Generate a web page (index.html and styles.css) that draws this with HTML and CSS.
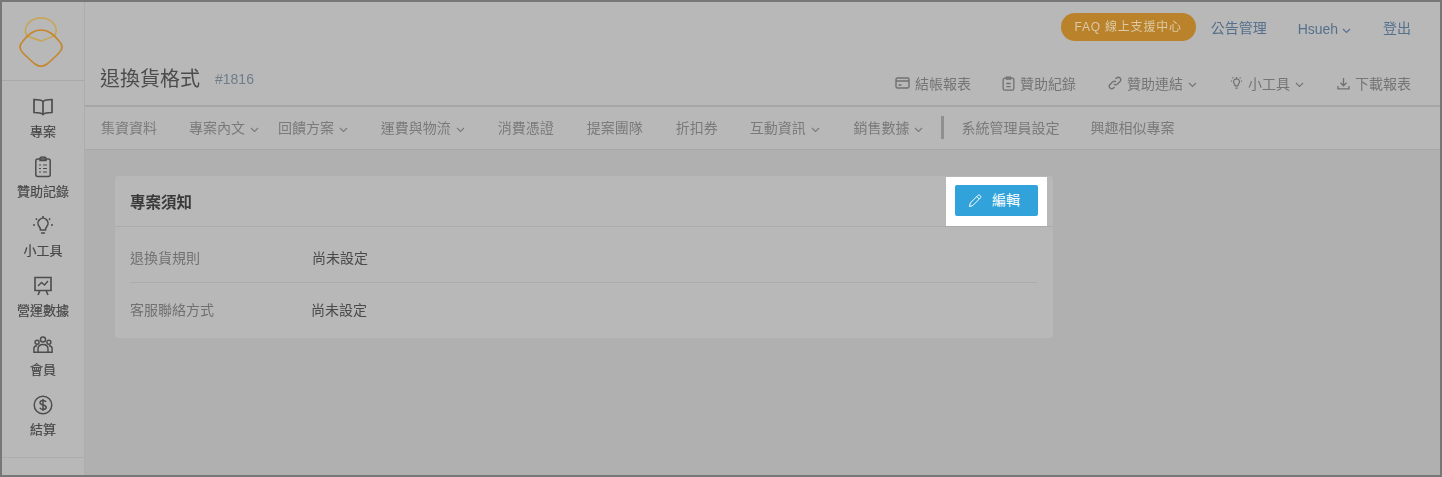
FILE: index.html
```html
<!DOCTYPE html>
<html lang="zh-Hant">
<head>
  <meta charset="UTF-8" />
  <title>退換貨格式</title>
  <link rel="stylesheet" href="styles.css">
</head>
<body>
  <div class="frame">
    <aside class="sidebar soft">
      <div class="logo">
        <svg width="46" height="50" viewBox="0 0 46 50" fill="none">
          <path d="M22 24 C17 22 12 21 8 19 C3 10 11 1 22 1 C33 1 40 10 36 18 C32 21 27 22 22 24 Z" stroke="#c9a44e" stroke-width="1.500"/>
          <path d="M22 13 C30 13 35 18 40 24 C44 28 44 32 40 36 C36 40 32 44 28 47 C24 50 20 50 16 47 C12 44 8 40 4 36 C0 32 0 28 4 24 C9 18 14 13 22 13 Z" stroke="#c4872e" stroke-width="1.700"/>
        </svg>
      </div>
      <nav class="side-nav">
        <a class="side-item">
          <svg class="side-icon" width="20" height="18" viewBox="0 0 20 18" fill="none" stroke="#4d4d4d" stroke-width="1.700"><path d="M10 3.500 C8.500 2 6 1.500 1 1.500 V14.500 C6 14.500 8.500 15 10 16.500 C11.500 15 14 14.500 19 14.500 V1.500 C14 1.500 11.500 2 10 3.500 Z M10 3.500 V16.500"/></svg>
          <span>專案</span>
        </a>
        <a class="side-item">
          <svg class="side-icon" width="18" height="22" viewBox="0 0 18 22" fill="none" stroke="#4d4d4d" stroke-width="1.500"><rect x="1.800" y="3" width="14.400" height="17.500" rx="2"/><path d="M6 3 V2.500 C6 1.500 7 1 9 1 C11 1 12 1.500 12 2.500 V4.500 H6 Z"/><path d="M5 9 H7 M9 9 H13 M5 12.500 H7 M9 12.500 H13 M5 16 H7 M9 16 H13" stroke-width="1.200"/></svg>
          <span>贊助記錄</span>
        </a>
        <a class="side-item">
          <svg class="side-icon" width="22" height="22" viewBox="0 0 22 22" fill="none" stroke="#4d4d4d" stroke-width="1.600"><path d="M7.200 11.500 A5 5 0 1 1 14.800 11.500 C13.800 12.700 13.500 13.500 13.500 15 H8.500 C8.500 13.500 8.200 12.700 7.200 11.500 Z M9 18 H13"/><path d="M11 1 V3 M3.800 3.500 L5 4.800 M18.200 3.500 L17 4.800 M1 10 H3 M19 10 H21"/></svg>
          <span>小工具</span>
        </a>
        <a class="side-item">
          <svg class="side-icon" width="18" height="20" viewBox="0 0 18 20" fill="none" stroke="#4d4d4d" stroke-width="1.600"><path d="M1 1.500 H17 V14.500 H1 Z M6 14.500 L4 19 M12 14.500 L14 19"/><path d="M4 10 L7.500 6.500 L10.500 9 L14 5" stroke-width="1.400"/></svg>
          <span>營運數據</span>
        </a>
        <a class="side-item">
          <svg class="side-icon" width="20" height="19" viewBox="0 0 22 20" fill="none" stroke="#4d4d4d" stroke-width="1.600"><circle cx="11" cy="4" r="2.800"/><circle cx="4.500" cy="7" r="2.200"/><circle cx="17.500" cy="7" r="2.200"/><path d="M5.500 18 V14.500 C5.500 11 8 9.500 11 9.500 C14 9.500 16.500 11 16.500 14.500 V18 Z M5.500 18 H1 V14 C1 12 2.500 10.800 4.500 10.800 M16.500 18 H21 V14 C21 12 19.500 10.800 17.500 10.800"/></svg>
          <span>會員</span>
        </a>
        <a class="side-item">
          <svg class="side-icon" width="20" height="20" viewBox="0 0 20 20" fill="none" stroke="#4d4d4d" stroke-width="1.500"><circle cx="10" cy="10" r="8.800"/><path d="M13 7 C12.500 5.800 11.300 5.500 10 5.500 C8.300 5.500 7 6.200 7 7.700 C7 10.700 13.200 9.200 13.200 12.300 C13.200 13.800 11.800 14.500 10 14.500 C8.500 14.500 7.300 14 6.800 12.800 M10 4 V16"/></svg>
          <span>結算</span>
        </a>
      </nav>
      <div class="side-foot"></div>
    </aside>

    <main class="main">
      <header class="topbar soft">
        <div class="top-links">
          <a class="faq">FAQ 線上支援中心</a>
          <a class="top-link">公告管理</a>
          <a class="top-link user-link">Hsueh <svg class="chev" width="9" height="6" viewBox="0 0 9 6"><path d="M1 1 L4.500 4.500 L8 1"/></svg></a>
          <a class="top-link">登出</a>
        </div>
        <div class="title-row">
          <div class="title-wrap">
            <h1 class="title">退換貨格式</h1>
            <span class="project-id">#1816</span>
          </div>
          <div class="tools">
            <a class="tool">
              <svg width="15" height="12" viewBox="0 0 15 12" fill="none" stroke="#707070" stroke-width="1.400"><rect x="1" y="1" width="13" height="10" rx="1.500"/><path d="M1 4 H14 M3.500 8 H6.500" /></svg>
              結帳報表</a>
            <a class="tool">
              <svg width="13" height="15" viewBox="0 0 12 14" fill="none" stroke="#707070" stroke-width="1.200"><rect x="1" y="2" width="10" height="11.200" rx="1.500"/><path d="M4 2 V1 H8 V3 H4 Z M4 7 H8 M4 10 H8"/></svg>
              贊助紀錄</a>
            <a class="tool">
              <svg width="14" height="14" viewBox="0 0 14 14" fill="none" stroke="#707070" stroke-width="1.300"><path d="M6 8 C7 9 8.500 9 9.500 8 L12 5.500 C13 4.500 13 3 12 2 C11 1 9.500 1 8.500 2 L7.500 3 M8 6 C7 5 5.500 5 4.500 6 L2 8.500 C1 9.500 1 11 2 12 C3 13 4.500 13 5.500 12 L6.500 11"/></svg>
              贊助連結 <svg class="chev" width="9" height="6" viewBox="0 0 9 6"><path d="M1 1 L4.500 4.500 L8 1"/></svg></a>
            <a class="tool">
              <svg width="13" height="14" viewBox="0 0 14 14" fill="none" stroke="#707070" stroke-width="1.300"><path d="M4.800 8 A3.200 3.200 0 1 1 9.200 8 C8.700 8.600 8.500 9 8.500 10 H5.500 C5.500 9 5.300 8.600 4.800 8 Z M5.800 12.500 H8.200 M7 .5 V1.800 M1 5 H2.200 M11.800 5 H13 M2.700 1 L3.500 2 M11.300 1 L10.500 2"/></svg>
              小工具 <svg class="chev" width="9" height="6" viewBox="0 0 9 6"><path d="M1 1 L4.500 4.500 L8 1"/></svg></a>
            <a class="tool">
              <svg width="13" height="13" viewBox="0 0 13 13" fill="none" stroke="#707070" stroke-width="1.300"><path d="M6.500 1 V8.500 M3.500 5.800 L6.500 8.800 L9.500 5.800 M1 9 V11.800 H12 V9"/></svg>
              下載報表</a>
          </div>
        </div>
      </header>

      <nav class="tabs soft">
        <a class="tab tab-first">集資資料</a>
        <a class="tab tab-tight">專案內文 <svg class="chev" width="9" height="6" viewBox="0 0 9 6"><path d="M1 1 L4.500 4.500 L8 1"/></svg></a>
        <a class="tab">回饋方案 <svg class="chev" width="9" height="6" viewBox="0 0 9 6"><path d="M1 1 L4.500 4.500 L8 1"/></svg></a>
        <a class="tab">運費與物流 <svg class="chev" width="9" height="6" viewBox="0 0 9 6"><path d="M1 1 L4.500 4.500 L8 1"/></svg></a>
        <a class="tab">消費憑證</a>
        <a class="tab">提案團隊</a>
        <a class="tab tab-first">折扣券</a>
        <a class="tab tab-wide">互動資訊 <svg class="chev" width="9" height="6" viewBox="0 0 9 6"><path d="M1 1 L4.500 4.500 L8 1"/></svg></a>
        <a class="tab">銷售數據 <svg class="chev" width="9" height="6" viewBox="0 0 9 6"><path d="M1 1 L4.500 4.500 L8 1"/></svg></a>
        <span class="tab-sep"></span>
        <a class="tab">系統管理員設定</a>
        <a class="tab tab-last">興趣相似專案</a>
      </nav>

      <section class="content">
        <div class="card">
          <div class="card-head">
            <h2 class="card-title soft">專案須知</h2>
            <div class="spotlight">
              <button class="edit-btn">
                <svg width="14" height="14" viewBox="0 0 14 14" fill="none" stroke="#fff" stroke-width="1"><path d="M1.500 12.500 L2.300 9 L9.800 1.500 C10.500 .8 11.500 .8 12.200 1.500 C13 2.300 13 3.300 12.300 4 L4.800 11.500 Z M8.800 2.500 L11.300 5"/></svg>
                編輯
              </button>
            </div>
          </div>
          <div class="card-body soft">
            <div class="row">
              <span class="row-label">退換貨規則</span>
              <span class="row-value">尚未設定</span>
            </div>
            <div class="row">
              <span class="row-label">客服聯絡方式</span>
              <span class="row-value">尚未設定</span>
            </div>
          </div>
        </div>
      </section>
    </main>
  </div>
</body>
</html>
```

FILE: styles.css
```css
*, *::before, *::after {
  box-sizing: border-box;
}

html, body {
  height: 100%;
}

body {
  margin: 0;
  background: #b5b5b5;
  font-family: "Liberation Sans", "Noto Sans CJK TC", sans-serif;
  font-size: 14px;
  overflow: hidden;
}

a {
  color: inherit;
  text-decoration: none;
}

/* everything behind the spotlight is slightly out of focus */
.soft {
  filter: blur(0.7px);
}

.frame {
  height: 477px;
  display: flex;
  border: 2px solid #777;
  background: #b0b0b0;
}

.chev {
  fill: none;
  stroke: currentColor;
  stroke-width: 1.100;
}

/* sidebar */
.sidebar {
  width: 83px;
  flex-shrink: 0;
  background: #b8b8b8;
  border-right: 1px solid #adadad;
  display: flex;
  flex-direction: column;
}

.logo {
  height: 79px;
  display: flex;
  align-items: center;
  justify-content: center;
  border-bottom: 1px solid #a8a8a8;
  padding: 1px 3px 0 0;
}

.side-nav {
  display: flex;
  flex-direction: column;
  flex: 1;
  padding-top: 15px;
}

.side-item {
  height: 59.500px;
  display: flex;
  flex-direction: column;
  align-items: center;
  color: #484848;
  font-size: 13px;
  line-height: 16px;
  -webkit-text-stroke: 0.2px #484848;
}

.side-icon {
  height: 22px;
  margin-bottom: 6px;
}

.side-foot {
  height: 18px;
  border-top: 1px solid #adadad;
}

/* header */
.main {
  flex: 1;
  min-width: 0;
  display: flex;
  flex-direction: column;
}

.topbar {
  height: 105px;
  background: #b8b8b8;
  border-bottom: 2px solid #a6a6a6;
  padding: 11px 29px 0 15px;
  display: flex;
  flex-direction: column;
}

.top-links {
  height: 28px;
  display: flex;
  align-items: center;
  justify-content: flex-end;
  gap: 32px;
  margin-bottom: 23px;
}

.faq {
  background: #b9822b;
  color: #dcc9a5;
  border-radius: 14px;
  height: 28px;
  width: 135px;
  line-height: 28px;
  text-align: center;
  font-size: 12px;
  letter-spacing: .8px;
  margin-right: -17px;
}

.top-link {
  color: #55708c;
}

.user-link {
  padding-top: 4px;
  margin-left: -1px;
}

.title-row {
  display: flex;
  align-items: center;
  justify-content: space-between;
}

.title-wrap {
  display: flex;
  align-items: center;
  gap: 15px;
}

.title {
  margin: 0;
  font-size: 20px;
  font-weight: 400;
  color: #4c4c4c;
  line-height: 28px;
}

.project-id {
  color: #6f7d8b;
  font-size: 14px;
}

.tools {
  display: flex;
  gap: 33px;
  padding-top: 9px;
}

.tool {
  color: #757575;
  display: flex;
  align-items: center;
  gap: 5px;
}

.tool .chev {
  margin-top: 3px;
}

.tool:first-child {
  margin-right: -2px;
}

.tool:nth-child(2) {
  margin-right: -1px;
}

/* tabs */
.tabs {
  height: 43px;
  background: #b8b8b8;
  border-bottom: 1px solid #a8a8a8;
  padding: 0 0 2px 16px;
  display: flex;
  align-items: center;
  gap: 33px;
  color: #7a7a7a;
}

.tab {
  white-space: nowrap;
}

.tab .chev {
  margin-left: 1px;
}

.tab-first {
  margin-right: -1px;
}

.tab-tight {
  margin-right: -14px;
}

.tab-wide {
  margin-right: 1px;
}

.tab-last {
  margin-left: -2px;
}

.tab-sep {
  width: 3px;
  height: 23px;
  background: #8f8f8f;
  margin: 0 -16px 0 -15px;
}

/* card */
.content {
  flex: 1;
  padding: 26px 0 0 30px;
}

.card {
  width: 938px;
  height: 162px;
  background: #b8b8b8;
  border-radius: 3px;
}

.card-head {
  height: 51px;
  padding: 1px 6px 0 15px;
  display: flex;
  align-items: flex-start;
  justify-content: space-between;
  border-bottom: 1px solid #acacac;
}

.card-title {
  margin: 13px 0 0;
  font-size: 15.500px;
  font-weight: 700;
  color: #3a3a3a;
}

.spotlight {
  width: 101px;
  height: 49px;
  background: #fff;
  padding: 8px 9px;
}

.edit-btn {
  width: 83px;
  height: 31px;
  border: 0;
  border-radius: 2px;
  background: #31a3da;
  color: #fff;
  font: inherit;
  display: flex;
  align-items: center;
  gap: 10px;
  padding: 0 0 3px 13px;
}

.edit-btn svg {
  margin-top: 3px;
}

.card-body {
  padding: 0 16px 0 15px;
}

.row {
  height: 55px;
  display: flex;
  align-items: center;
  color: #4a4a4a;
}

.row:first-child {
  padding-top: 4px;
}

.row + .row {
  border-top: 1px solid #acacac;
  padding-bottom: 2px;
}

.row-label {
  width: 182px;
  color: #707070;
}

.row + .row .row-label {
  width: 181px;
}
```
